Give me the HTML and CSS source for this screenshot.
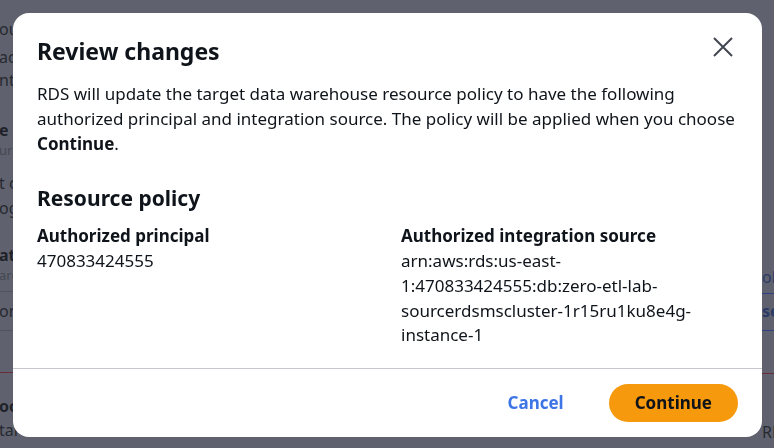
FILE: index.html
```html
<!DOCTYPE html>
<html lang="en">
<head>
<meta charset="utf-8">
<title>Review changes</title>
<link rel="stylesheet" href="styles.css">
</head>
<body>
<div class="page" aria-hidden="true">
  <div class="page-left">
    <div class="bg-row bg-r1">ou</div>
    <div class="bg-row bg-r2">ac</div>
    <div class="bg-row bg-r3">nt</div>
    <div class="bg-row bg-r4 bg-bold">e</div>
    <div class="bg-row bg-small">urc</div>
    <div class="bg-row bg-r6">t c</div>
    <div class="bg-row bg-r7">og</div>
    <div class="bg-row bg-r8 bg-bold">ata</div>
    <div class="bg-row bg-small">are</div>
    <div class="bg-line bg-l1"></div>
    <div class="bg-row bg-r10">on</div>
    <div class="bg-line bg-l2"></div>
    <div class="bg-red bg-red-l"></div>
    <div class="bg-row bg-r11 bg-bold">oo</div>
    <div class="bg-row bg-r12">tar</div>
  </div>
  <div class="page-right">
    <div class="bg-row bg-q1 bg-blue">ol</div>
    <div class="bg-line bg-blue-line bg-m1"></div>
    <div class="bg-row bg-q2 bg-blue bg-bold">se</div>
    <div class="bg-line bg-blue-line bg-m2"></div>
    <div class="bg-red bg-red-r"></div>
    <div class="bg-row bg-q3">RD</div>
  </div>
</div>

<div class="overlay">
  <div class="modal" role="dialog" aria-labelledby="modal-title">
    <div class="modal-header">
      <h2 class="modal-title" id="modal-title">Review changes</h2>
      <button class="close-btn" type="button" aria-label="Close">
        <svg width="20" height="20" viewBox="0 0 20 20" aria-hidden="true">
          <path d="M1 1 L19 19 M19 1 L1 19" stroke="#424650" stroke-width="2" fill="none" stroke-linecap="butt"/>
        </svg>
      </button>
    </div>
    <div class="modal-body">
      <p class="intro">RDS will update the target data warehouse resource policy to have the following authorized principal and integration source. The policy will be applied when you choose <b>Continue</b>.</p>
      <h3 class="section-title">Resource policy</h3>
      <div class="kv-grid">
        <div class="kv">
          <div class="kv-label">Authorized principal</div>
          <div class="kv-value">470833424555</div>
        </div>
        <div class="kv">
          <div class="kv-label">Authorized integration source</div>
          <div class="kv-value">arn:aws:rds:us-east-1:470833424555:db:zero-etl-lab-sourcerdsmscluster-1r15ru1ku8e4g-instance-1</div>
        </div>
      </div>
    </div>
    <div class="modal-footer">
      <button class="btn-link" type="button">Cancel</button>
      <button class="btn-primary" type="button">Continue</button>
    </div>
  </div>
</div>
</body>
</html>
```
FILE: styles.css
```css
html, body {
  margin: 0;
  padding: 0;
  height: 100%;
  overflow: hidden;
}
body {
  background: #5f626e;
  font-family: "Noto Sans", "Open Sans", sans-serif;
  color: #0f141a;
}

/* ---------- dimmed page underneath ---------- */
.page {
  display: flex;
  justify-content: space-between;
  height: 100vh;
  overflow: hidden;
}
.page-left {
  display: flex;
  flex-direction: column;
  margin-left: -1px;
  width: 40px;
}
.page-right {
  display: flex;
  flex-direction: column;
  width: 12px;
  white-space: nowrap;
}
.bg-row {
  height: 20px;
  line-height: 20px;
  font-size: 16px;
  color: #262930;
  white-space: nowrap;
}
.bg-bold { font-weight: 700; color: #1f2229; }
.bg-small { font-size: 13px; color: #454852; }
.bg-blue { color: #2b3a66; }
.bg-line { height: 1px; background: #50545f; }
.bg-blue-line { background: #2d4080; }
.bg-red { height: 1px; background: #6a2b36; }

.bg-r1 { margin-top: 19px; }
.bg-r2 { margin-top: 8px; }
.bg-r3 { margin-top: 3px; }
.bg-r4 { margin-top: 30px; }
.bg-r6 { margin-top: 13px; }
.bg-r7 { margin-top: 5px; }
.bg-r8 { margin-top: 27px; }
.bg-l1 { margin-top: 6px; }
.bg-r10 { margin-top: 9px; }
.bg-l2 { margin-top: 9px; }
.bg-red-l { margin-top: 41px; }
.bg-r11 { margin-top: 23px; }
.bg-r12 { margin-top: 4px; }

.bg-q1 { margin-top: 267px; }
.bg-m1 { margin-top: 6px; }
.bg-q2 { margin-top: 7px; }
.bg-m2 { margin-top: 9px; }
.bg-red-r { margin-top: 42px; }
.bg-q3 { margin-top: 48px; }

/* ---------- modal ---------- */
.overlay {
  position: fixed;
  inset: 0;
  display: flex;
  align-items: flex-start;
  justify-content: flex-start;
  padding: 13px 0 0 13px;
}
.modal {
  width: 749px;
  background: #ffffff;
  border-radius: 16px;
  overflow: hidden;
}
.modal-header {
  display: flex;
  justify-content: space-between;
  align-items: flex-start;
  padding: 24px 24px 0 24px;
}
.modal-title {
  margin: 0;
  font-size: 23px;
  line-height: 28px;
  font-weight: 700;
  color: #0f141a;
}
.close-btn {
  margin: -4px 1px 0 0;
  padding: 4px;
  width: 28px;
  height: 28px;
  border: none;
  background: transparent;
  display: flex;
  align-items: center;
  justify-content: center;
  cursor: pointer;
}
.modal-body {
  padding: 17px 24px 20px 24px;
  font-size: 17px;
  line-height: 24.75px;
}
.intro {
  margin: 0;
}
.intro b { font-weight: 700; }
.section-title {
  margin: 29px 0 0 0;
  font-size: 21px;
  line-height: 26px;
  font-weight: 700;
}
.kv-grid {
  display: grid;
  grid-template-columns: 1fr 1fr;
  column-gap: 27px;
  margin-top: 13px;
}
.kv-label { font-weight: 700; }
.kv-value { overflow-wrap: anywhere; }

.modal-footer {
  display: flex;
  justify-content: flex-end;
  align-items: center;
  gap: 25px;
  border-top: 1px solid #c6c6cd;
  padding: 15px 24px 15px 24px;
}
.btn-link {
  border: none;
  background: transparent;
  font-family: inherit;
  font-size: 17px;
  font-weight: 700;
  line-height: 24px;
  color: #3d74e6;
  padding: 7px 20px;
  cursor: pointer;
}
.btn-primary {
  border: none;
  background: #f7990c;
  font-family: inherit;
  font-size: 17px;
  font-weight: 700;
  line-height: 24px;
  color: #0f141a;
  padding: 7px 26px;
  border-radius: 20px;
  cursor: pointer;
}
```
